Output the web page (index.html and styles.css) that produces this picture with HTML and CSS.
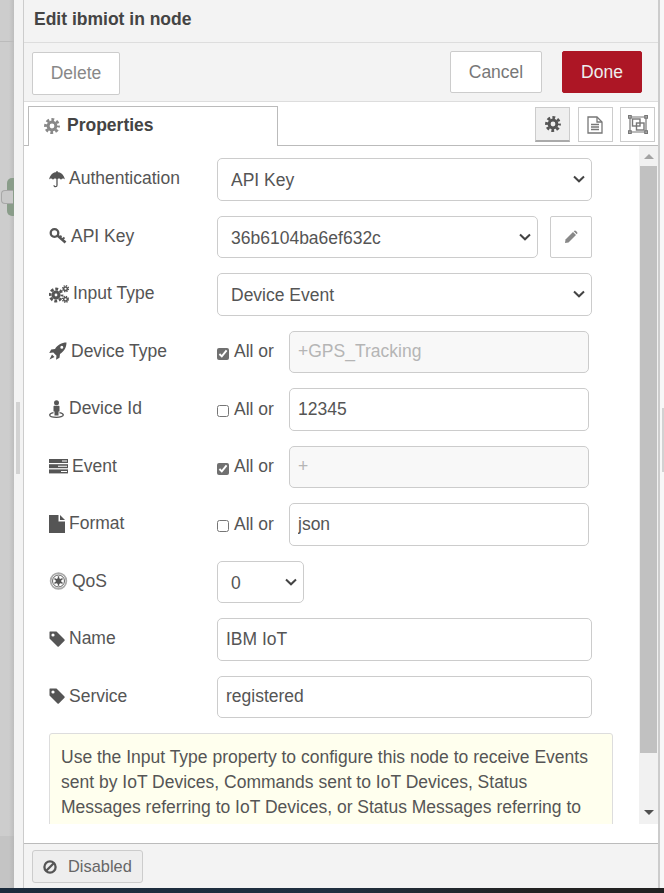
FILE: index.html
```html
<!DOCTYPE html>
<html lang="en">

<head>
  <meta charset="UTF-8">
  <meta name="viewport" content="width=device-width, initial-scale=1.0">
  <title>Edit ibmiot in node</title>

  <link rel="stylesheet" href="styles.css">
</head>

<body>
  <svg class="icon-defs">
    <symbol id="gear" viewBox="0 0 16 16">
      <circle cx="8" cy="8" r="3.9" fill="none" stroke="currentColor" stroke-width="3"/>
      <circle cx="8" cy="8" r="6.4" fill="none" stroke="currentColor" stroke-width="3" stroke-dasharray="2.8 2.23" stroke-dashoffset="1.4"/>
    </symbol>
    <symbol id="tag" viewBox="0 0 16 16">
      <path fill="currentColor" fill-rule="evenodd" d="M1 0.5H7.5L15.5 8.5Q16 9.2 15.5 9.8L9.8 15.5Q9.2 16 8.5 15.5L0.5 7.5V1Q0.5 0.5 1 0.5ZM4 2.4A1.6 1.6 0 1 0 4 5.6A1.6 1.6 0 1 0 4 2.4Z"/>
    </symbol>
  </svg>

  <div class="workspace">
    <div class="canvas">
      <div class="canvas-line"></div>
      <div class="node"></div>
      <div class="node-port"></div>
      <div class="canvas-footer"></div>
    </div>

    <div class="sash">
      <div class="sash-grip"></div>
    </div>

    <div class="tray">
      <div class="tray-title">Edit ibmiot in node</div>

      <div class="tray-toolbar">
        <button class="btn btn-delete">Delete</button>
        <div class="toolbar-right">
          <button class="btn btn-cancel">Cancel</button>
          <button class="btn btn-done">Done</button>
        </div>
      </div>

      <div class="tab-row">
        <div class="tab">
          <svg class="tab-icon"><use href="#gear"/></svg>
          Properties
        </div>
        <div class="tab-buttons">
          <button class="tab-btn active">
            <svg class="tab-btn-gear"><use href="#gear"/></svg>
          </button>
          <button class="tab-btn">
            <svg class="tab-btn-doc" viewBox="0 0 16 18" fill="none" stroke="currentColor" stroke-width="1.3">
              <path d="M1 1H10L15 6V17H1Z"/>
              <path d="M10 1V6H15M4 8.5H12M4 11H12M4 13.5H12"/>
            </svg>
          </button>
          <button class="tab-btn">
            <svg class="tab-btn-group" viewBox="0 0 20 19" fill="none" stroke="currentColor" stroke-width="1.4">
              <path d="M3 2H17M3 17H17M2 3V16M18 3V16" stroke-width="1.2"/>
              <rect x="0.7" y="0.7" width="2.4" height="2.4"/>
              <rect x="16.9" y="0.7" width="2.4" height="2.4"/>
              <rect x="0.7" y="15.9" width="2.4" height="2.4"/>
              <rect x="16.9" y="15.9" width="2.4" height="2.4"/>
              <rect x="4.5" y="4" width="7.5" height="7"/>
              <rect x="8.5" y="8" width="7.5" height="7"/>
            </svg>
          </button>
        </div>
      </div>

      <div class="tray-body">
        <div class="form-view">
          <form class="form">
            <div class="form-row">
              <label class="form-label">
                <svg class="icon w16" viewBox="0 0 16 18">
                  <path d="M8 2C4 2 1 5 0 9.500C1 8.200 3 8.200 4 9.800C5 8.200 7 8.200 8 9.300C9 8.200 11 8.200 12 9.800C13 8.200 15 8.200 16 9.500C15 5 12 2 8 2Z"/>
                  <path d="M8 1V15.200A1.500 1.500 0 0 1 5 15.200" fill="none" stroke="currentColor" stroke-width="1.300"/>
                </svg>
                Authentication
              </label>
              <select class="field field-full"><option>API Key</option></select>
            </div>

            <div class="form-row">
              <label class="form-label">
                <svg class="icon icon-line w18" viewBox="0 0 18 18" stroke="currentColor">
                  <circle cx="5.500" cy="6" r="3.800" stroke-width="2.300"/>
                  <path d="M8.500 8.500L16.500 15.500" stroke-width="2.600"/>
                  <path d="M13 12.500L15.500 10.500M10.500 10.500L12.500 8.800" stroke-width="1.800"/>
                </svg>
                API Key
              </label>
              <select class="field field-key"><option>36b6104ba6ef632c</option></select>
              <button type="button" class="edit-btn">
                <svg class="edit-icon" viewBox="0 0 14 14">
                  <path d="M1 13L1.500 9.500L9 2L12 5L4.500 12.500Z"/>
                  <path d="M10 1Q11 0 12 1L13 2Q14 3 13 4L12.700 4.300L9.700 1.300Z"/>
                </svg>
              </button>
            </div>

            <div class="form-row">
              <label class="form-label">
                <svg class="icon icon-line w20" viewBox="0 0 20 18" stroke="currentColor">
                  <circle cx="7" cy="10" r="3" stroke-width="3.200"/>
                  <circle cx="7" cy="10" r="6" stroke-width="2.800" stroke-dasharray="2.900 1.810" stroke-dashoffset="1.450"/>
                  <circle cx="16.500" cy="3.700" r="1.800" stroke-width="1.500"/>
                  <circle cx="16.500" cy="3.700" r="3" stroke-width="1.300" stroke-dasharray="1.300 1.060"/>
                  <circle cx="16.500" cy="14.300" r="1.800" stroke-width="1.500"/>
                  <circle cx="16.500" cy="14.300" r="3" stroke-width="1.300" stroke-dasharray="1.300 1.060"/>
                </svg>
                Input Type
              </label>
              <select class="field field-full"><option>Device Event</option></select>
            </div>

            <div class="form-row">
              <label class="form-label">
                <svg class="icon w18" viewBox="0 0 18 18">
                  <path fill-rule="evenodd" d="M17.500 0.500C12.500 0.500 8.500 3 6 7L2.200 7.500L0.200 11L4.300 10.500L7.500 13.700L7 17.800L10.500 15.800L11 12C15 9.500 17.500 5.500 17.500 0.500ZM12.800 3.700A1.500 1.500 0 1 0 12.800 6.700A1.500 1.500 0 1 0 12.800 3.700Z"/>
                  <path d="M3 12.500L0.500 17.500L5.500 15Z"/>
                </svg>
                Device Type
              </label>
              <input type="checkbox" class="check" checked>
              <span class="check-text">All or</span>
              <input class="field field-topic" value="+GPS_Tracking" disabled>
            </div>

            <div class="form-row">
              <label class="form-label">
                <svg class="icon w16" viewBox="0 0 16 18">
                  <circle cx="7.500" cy="2.800" r="2.500"/>
                  <path d="M4.500 6.500Q4.500 5.800 5.200 5.800H9.800Q10.500 5.800 10.500 6.500V11.500H9.500V15.500H5.500V11.500H4.500Z"/>
                  <path d="M4.500 12.700C2 13.200 0.700 14 0.700 15C0.700 16.400 4 17.300 7.500 17.300C11 17.300 14.300 16.400 14.300 15C14.300 14 13 13.200 10.500 12.700" fill="none" stroke="currentColor" stroke-width="1.300"/>
                </svg>
                Device Id
              </label>
              <input type="checkbox" class="check">
              <span class="check-text">All or</span>
              <input class="field field-topic" value="12345">
            </div>

            <div class="form-row">
              <label class="form-label">
                <svg class="icon w19" viewBox="0 0 19 18">
                  <rect y="2" width="19" height="4"/>
                  <rect y="7.200" width="19" height="4"/>
                  <rect y="12.400" width="19" height="4"/>
                  <path d="M13 3.500H18V4.500H13ZM9 8.700H18V9.700H9ZM12 13.900H18V14.900H12Z" fill="#fff"/>
                </svg>
                Event
              </label>
              <input type="checkbox" class="check" checked>
              <span class="check-text">All or</span>
              <input class="field field-topic" value="+" disabled>
            </div>

            <div class="form-row">
              <label class="form-label">
                <svg class="icon w16" viewBox="0 0 16 18">
                  <path d="M0 0H9.500V6.500H16V18H0Z"/>
                  <path d="M11 0L16 5H11Z"/>
                </svg>
                Format
              </label>
              <input type="checkbox" class="check">
              <span class="check-text">All or</span>
              <input class="field field-topic" value="json">
            </div>

            <div class="form-row">
              <label class="form-label">
                <svg class="icon icon-line w19" viewBox="0 0 19 19" stroke="currentColor">
                  <circle cx="9.500" cy="9.500" r="8.300" stroke="#aaa" stroke-width="1.800"/>
                  <circle cx="9.500" cy="9.500" r="6.300" stroke-width="1"/>
                  <circle cx="9.500" cy="9.500" r="3" fill="currentColor" stroke="none"/>
                  <path d="M9.500 4.500V14.500M5.200 7L13.800 12M5.200 12L13.800 7" stroke-width="1.500"/>
                </svg>
                QoS
              </label>
              <select class="field field-qos"><option>0</option></select>
            </div>

            <div class="form-row">
              <label class="form-label">
                <svg class="icon w16"><use href="#tag"/></svg>
                Name
              </label>
              <input class="field field-full" value="IBM IoT">
            </div>

            <div class="form-row">
              <label class="form-label">
                <svg class="icon w16"><use href="#tag"/></svg>
                Service
              </label>
              <input class="field field-full" value="registered">
            </div>

            <div class="form-tips">
              Use the Input Type property to configure this node to receive Events
              sent by IoT Devices, Commands sent to IoT Devices, Status
              Messages referring to IoT Devices, or Status Messages referring to
            </div>
          </form>

          <div class="scrollbar">
            <div class="arrow-up"></div>
            <div class="thumb"></div>
            <div class="track-rest"></div>
            <div class="arrow-down"></div>
          </div>
        </div>
      </div>

      <div class="tray-footer">
        <button class="btn-disabled">
          <svg class="ban-icon" viewBox="0 0 14 14" fill="none" stroke="currentColor" stroke-width="2.300">
            <circle cx="7" cy="7" r="5.600"/>
            <path d="M3 11L11 3"/>
          </svg>
          Disabled
        </button>
      </div>
    </div>

    <div class="sidebar-edge">
      <div class="edge-grip"></div>
    </div>
  </div>

  <div class="bottom-bar"></div>
</body>

</html>
```

FILE: styles.css
```css
html,
body {
  height: 100%;
}

body {
  font-family: "Liberation Sans", Arial, sans-serif;
  font-size: 17.5px;
  color: #555;
  display: flex;
  flex-direction: column;
  height: 893px;
  margin: 0;
  overflow: hidden;
  background-color: #fff;
}

.icon-defs {
  display: none;
}

.workspace {
  display: flex;
  flex: 1;
  min-height: 0;
}

/* dimmed canvas on the left */
.canvas {
  position: relative;
  width: 14px;
  background: linear-gradient(to right, #cdcdcd 0, #cdcdcd 9px, #bdbdbd 14px);
}

.canvas-line {
  position: absolute;
  top: 41px;
  left: 0;
  right: 0;
  height: 1px;
  background-color: #bbb;
}

.canvas-footer {
  position: absolute;
  top: 836px;
  left: 0;
  right: 0;
  bottom: 0;
  background: linear-gradient(to right, #c4c4c4 0, #c4c4c4 9px, #b8b8b8 14px);
}

.node {
  position: absolute;
  top: 178px;
  left: 7px;
  width: 7px;
  height: 38px;
  background-color: #8a9d8a;
  border-radius: 5px 0 0 5px;
}

.node-port {
  position: absolute;
  top: 190px;
  left: 1px;
  width: 12px;
  height: 14px;
  box-sizing: border-box;
  background-color: #c9c9c9;
  border: 1px solid #a8a8a8;
  border-right: none;
  border-radius: 4px 0 0 4px;
}

.sash {
  width: 9px;
  padding-top: 402px;
  background-color: #f3f3f3;
  border-right: 1px solid #ccc;
}

.sash-grip {
  width: 4px;
  height: 72px;
  margin-left: 2px;
  background-color: #d2d2d2;
}

.tray {
  display: flex;
  flex-direction: column;
  flex: 1;
  min-width: 0;
  background-color: #fff;
  border-right: 2px solid #ccc;
}

.tray-title {
  box-sizing: border-box;
  height: 43px;
  padding: 8px 10px 0;
  line-height: 22px;
  font-size: 17.5px;
  font-weight: 700;
  color: #444;
  background-color: #f3f3f3;
  border-bottom: 1px solid #ddd;
}

.tray-toolbar {
  display: flex;
  justify-content: space-between;
  align-items: flex-start;
  height: 59px;
  box-sizing: border-box;
  padding: 8px 16px 0 8px;
  background-color: #f3f3f3;
  border-bottom: 1px solid #ddd;
}

.toolbar-right {
  display: flex;
  gap: 20px;
}

.btn {
  height: 42px;
  padding: 0;
  font-family: inherit;
  font-size: 17.5px;
  border: 1px solid #ccc;
  border-radius: 2px;
  background-color: #fff;
  color: #777;
}

.btn-delete {
  width: 88px;
  height: 43px;
  margin-top: 1px;
  color: #888;
}

.btn-cancel {
  width: 92px;
}

.btn-done {
  width: 80px;
  color: #eee;
  background-color: #ad1625;
  border-color: #ad1625;
}

.tab-row {
  display: flex;
  justify-content: space-between;
  align-items: flex-start;
  height: 44px;
  box-sizing: border-box;
  padding: 4px 3px 0 4px;
  border-bottom: 1px solid #bbb;
}

.tab {
  display: flex;
  align-items: center;
  gap: 7px;
  width: 250px;
  height: 40px;
  box-sizing: border-box;
  padding: 0 0 2px 15px;
  font-weight: 700;
  color: #444;
  background-color: #fff;
  border: 1px solid #bbb;
  border-bottom: none;
}

.tab-icon {
  width: 16px;
  height: 16px;
  color: #888;
}

.tab-buttons {
  display: flex;
  gap: 7.5px;
  padding-top: 1px;
}

.tab-btn {
  display: flex;
  align-items: center;
  justify-content: center;
  width: 35px;
  height: 35px;
  padding: 0;
  color: #777;
  background-color: #fff;
  border: 1px solid #ccc;
}

.tab-btn.active {
  color: #555;
  background-color: #efefef;
  border-bottom: 2px solid #aaa;
}

.tab-btn-gear {
  width: 16px;
  height: 16px;
}

.tab-btn-doc {
  width: 16px;
  height: 18px;
}

.tab-btn-group {
  width: 20px;
  height: 19px;
}

.tray-body {
  flex: 1;
  min-height: 0;
  padding-bottom: 19px;
}

.form-view {
  display: flex;
  height: 100%;
}

.form {
  flex: 1;
  min-width: 0;
  overflow: hidden;
  padding: 12px 26px 0 25px;
}

.form-row {
  display: flex;
  align-items: center;
  height: 42.5px;
  margin-bottom: 15px;
}

.form-label {
  display: flex;
  align-items: center;
  gap: 4px;
  width: 168px;
  flex-shrink: 0;
  padding-bottom: 1px;
}

.icon {
  height: 18px;
  fill: currentColor;
  flex-shrink: 0;
}

.icon-line {
  fill: none;
}

.w16 {
  width: 16px;
}

.w18 {
  width: 18px;
}

.w19 {
  width: 19px;
}

.w20 {
  width: 20px;
}

.field {
  height: 42.5px;
  box-sizing: border-box;
  padding: 0 8px;
  font-family: inherit;
  font-size: 17.5px;
  color: #555;
  background-color: #fff;
  border: 1px solid #ccc;
  border-radius: 5px;
}

select.field {
  appearance: none;
  padding: 2px 24px 0 13px;
  background-image: url("data:image/svg+xml,%3Csvg xmlns='http://www.w3.org/2000/svg' width='12' height='8' viewBox='0 0 12 8'%3E%3Cpath d='M1 1.500L6 6.300L11 1.500' fill='none' stroke='%23444' stroke-width='2'/%3E%3C/svg%3E");
  background-repeat: no-repeat;
  background-position: right 6px center;
}

.field:disabled {
  color: #b5b5b5;
  background-color: #f8f8f8;
  opacity: 1;
}

.field-full {
  width: 375px;
}

.field-key {
  width: 321px;
}

.field-qos {
  width: 87px;
}

.field-topic {
  width: 300px;
}

.edit-btn {
  display: flex;
  align-items: center;
  justify-content: center;
  width: 42px;
  height: 42px;
  margin-left: 12px;
  padding: 0;
  background-color: #fff;
  border: 1px solid #ccc;
  border-radius: 2px;
}

.edit-icon {
  width: 14px;
  height: 14px;
  fill: #888;
}

.check {
  width: 12px;
  height: 12px;
  margin: 4px 5px 0 0;
  accent-color: #707070;
}

.check-text {
  width: 55px;
}

.form-tips {
  width: 564px;
  box-sizing: border-box;
  padding: 11px 11px 40px;
  line-height: 25px;
  background-color: #ffe;
  border: 1px solid #ddd;
  border-radius: 3px;
}

.scrollbar {
  display: flex;
  flex-direction: column;
  align-items: center;
  width: 19px;
  padding: 0 1px;
  box-sizing: border-box;
  background-color: #f1f1f1;
}

.arrow-up {
  width: 0;
  height: 0;
  margin: 8px 0 7px;
  border-left: 5px solid transparent;
  border-right: 5px solid transparent;
  border-bottom: 5px solid #a3a3a3;
}

.thumb {
  width: 100%;
  height: 587px;
  background-color: #c1c1c1;
}

.track-rest {
  flex: 1;
}

.arrow-down {
  width: 0;
  height: 0;
  margin-bottom: 9px;
  border-left: 5px solid transparent;
  border-right: 5px solid transparent;
  border-top: 5px solid #505050;
}

.tray-footer {
  height: 45px;
  box-sizing: border-box;
  padding: 6px 8px 0;
  background-color: #f3f3f3;
  border-top: 1px solid #bbb;
}

.btn-disabled {
  display: flex;
  align-items: center;
  gap: 11px;
  width: 111px;
  height: 33px;
  padding: 0 0 0 10px;
  font-family: inherit;
  font-size: 16.4px;
  color: #666;
  background-color: #eee;
  border: 1px solid #ccc;
  border-radius: 3px;
}

.ban-icon {
  width: 14px;
  height: 14px;
  color: #555;
}

.sidebar-edge {
  width: 4px;
  padding-top: 408px;
  background-color: #f7f7f7;
}

.edge-grip {
  width: 2px;
  height: 64px;
  margin-left: 2px;
  background-color: #d2d2d2;
}

.bottom-bar {
  height: 5px;
  background: linear-gradient(to right, #1b2b3c 0, #1f2f40 50%, #222 80%);
}
```
